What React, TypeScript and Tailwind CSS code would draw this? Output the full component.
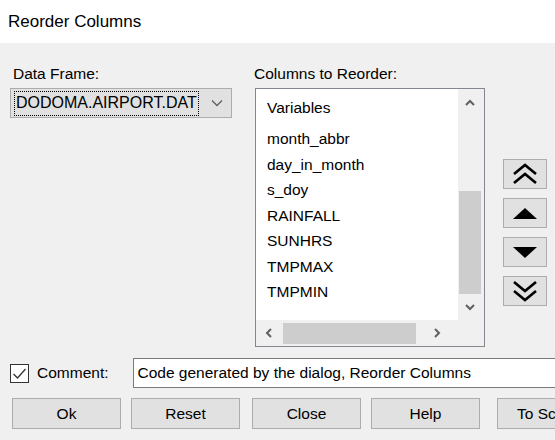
import React from "react";

const font = { fontFamily: '"Liberation Sans", Arial, sans-serif' };

function Chevron({ dir, className }: { dir: "up" | "down" | "left" | "right"; className?: string }) {
  const paths: Record<string, string> = {
    up: "M1 7 L5 3 L9 7",
    down: "M1 3 L5 7 L9 3",
    left: "M7 1 L3 5 L7 9",
    right: "M3 1 L7 5 L3 9",
  };
  return (
    <svg width="10" height="10" viewBox="0 0 10 10" className={className}>
      <path d={paths[dir]} fill="none" stroke="#606060" strokeWidth="2" />
    </svg>
  );
}

function SideButton({ children }: { children: React.ReactNode }) {
  return (
    <div className="w-[44px] h-[30px] bg-[#e1e1e1] border border-[#adadad] flex items-center justify-center">
      {children}
    </div>
  );
}

function BottomButton({ label, className }: { label: string; className?: string }) {
  return (
    <div
      className={`h-[31px] w-[109px] shrink-0 bg-[#e1e1e1] border border-[#adadad] flex items-center justify-center text-[15.5px] text-black ${className ?? ""}`}
    >
      {label}
    </div>
  );
}

export default function App() {
  const items = ["month_abbr", "day_in_month", "s_doy", "RAINFALL", "SUNHRS", "TMPMAX", "TMPMIN"];
  return (
    <div className="w-[555px] h-[440px] overflow-hidden bg-[#f0f0f0] text-black" style={font}>
      <div className="h-[43px] bg-white flex items-center pl-[8px] text-[17px]">Reorder Columns</div>
      <div className="flex pt-[22px] h-[315px]">
        {/* left column */}
        <div className="ml-[10px] w-[222px] flex flex-col">
          <div className="h-[23px] pl-[3px] text-[15.5px] leading-[18px]">Data Frame:</div>
          <div className="h-[30px] bg-[#e1e1e1] border border-[#adadad] flex items-center pl-[3px] pr-[8px]">
            <div className="h-[25px] px-[1px] border border-dotted border-black flex items-center text-[16px] leading-none">
              DODOMA.AIRPORT.DAT
            </div>
            <div className="flex-1" />
            <svg width="12" height="8" viewBox="0 0 12 8">
              <path d="M1 1.5 L6 6.5 L11 1.5" fill="none" stroke="#606060" strokeWidth="1.3" />
            </svg>
          </div>
        </div>
        {/* middle column */}
        <div className="ml-[23px] w-[230px] flex flex-col">
          <div className="h-[23px] -ml-[1px] text-[15.5px] leading-[18px]">Columns to Reorder:</div>
          <div className="h-[259px] border border-[#828790] bg-white flex flex-col">
            <div className="flex flex-1 min-h-0">
              <div className="flex-1 pl-[11px] pt-[6px] text-[15.5px]">
                <div className="h-[25px] flex items-center">Variables</div>
                <div className="h-[6px]" />
                {items.map((it) => (
                  <div key={it} className="h-[25.5px] flex items-center">
                    {it}
                  </div>
                ))}
              </div>
              <div className="w-[26px] bg-[#f0f0f0] flex flex-col">
                <div className="h-[28px] flex items-center justify-center pr-[2px]">
                  <Chevron dir="up" />
                </div>
                <div className="h-[74px]" />
                <div className="h-[103px] ml-[1px] w-[22px] bg-[#cdcdcd]" />
                <div className="flex-1 flex items-center justify-center pr-[2px]">
                  <Chevron dir="down" />
                </div>
              </div>
            </div>
            <div className="h-[26px] flex">
              <div className="flex-1 bg-[#f0f0f0] flex items-center">
                <div className="w-[26px] flex items-center justify-center">
                  <Chevron dir="left" />
                </div>
                <div className="ml-[1px] w-[133px] h-[21px] bg-[#cdcdcd]" />
                <div className="flex-1 flex items-center justify-center">
                  <Chevron dir="right" />
                </div>
              </div>
              <div className="w-[26px] bg-[#f0f0f0]" />
            </div>
          </div>
        </div>
        {/* right column */}
        <div className="ml-[18px] pt-[94px] flex flex-col gap-[9px]">
          <SideButton>
            <svg width="26" height="22" viewBox="0 0 26 22">
              <path d="M2 11 L13 2 L24 11 M2 20 L13 11 L24 20" fill="none" stroke="#000" strokeWidth="2.6" />
            </svg>
          </SideButton>
          <SideButton>
            <svg width="24" height="11" viewBox="0 0 24 11">
              <path d="M0 11 L12 0 L24 11 Z" fill="#000" />
            </svg>
          </SideButton>
          <SideButton>
            <svg width="24" height="11" viewBox="0 0 24 11">
              <path d="M0 0 L12 11 L24 0 Z" fill="#000" />
            </svg>
          </SideButton>
          <SideButton>
            <svg width="26" height="22" viewBox="0 0 26 22">
              <path d="M2 2 L13 11 L24 2 M2 11 L13 20 L24 11" fill="none" stroke="#000" strokeWidth="2.6" />
            </svg>
          </SideButton>
        </div>
      </div>
      {/* comment row */}
      <div className="h-[30px] flex items-center">
        <div className="ml-[10px] w-[19px] h-[19px] border border-[#333] bg-white flex items-center justify-center">
          <svg width="15" height="13" viewBox="0 0 15 13">
            <path d="M1.5 7 L5.5 11 L13.5 2" fill="none" stroke="#333" strokeWidth="1.3" />
          </svg>
        </div>
        <div className="ml-[8px] text-[15.5px]">Comment:</div>
        <div className="ml-[24px] flex-1 h-[30px] bg-white border border-[#7a7a7a] border-r-0 flex items-center pl-[4px] text-[15.5px] whitespace-nowrap overflow-hidden">
          Code generated by the dialog, Reorder Columns
        </div>
      </div>
      {/* buttons row */}
      <div className="flex mt-[10px]">
        <BottomButton label="Ok" className="ml-[12px]" />
        <BottomButton label="Reset" className="ml-[10px]" />
        <BottomButton label="Close" className="ml-[12px]" />
        <BottomButton label="Help" className="ml-[10px]" />
        <div className="ml-[17px] h-[31px] w-[109px] shrink-0 bg-[#e1e1e1] border border-[#adadad] flex items-center pl-[19px] text-[15.5px] whitespace-nowrap">
          To Script
        </div>
      </div>
    </div>
  );
}
